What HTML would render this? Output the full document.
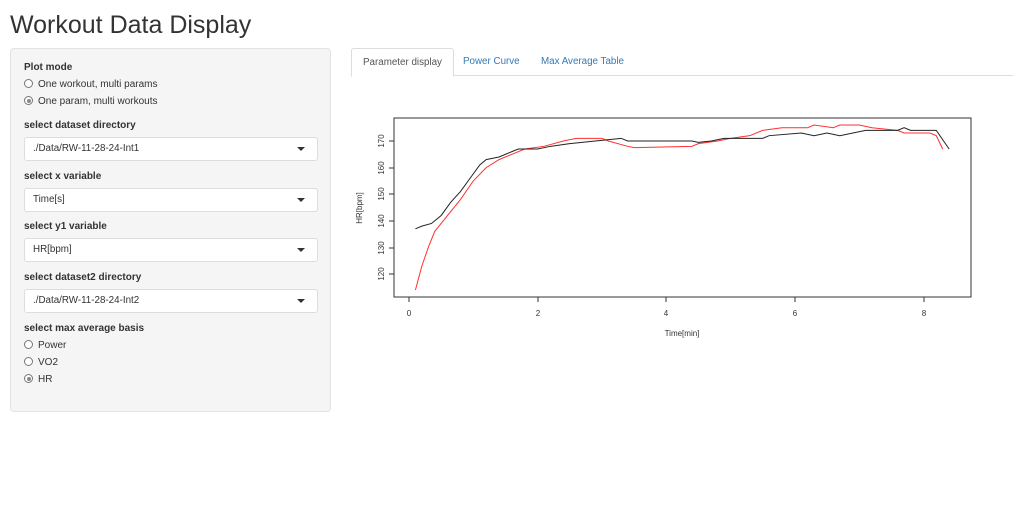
<!DOCTYPE html>
<html><head><style>
body{margin:0;width:1024px;height:508px;background:#fff;font-family:"Liberation Sans",Arial,sans-serif;color:#333;position:relative;overflow:hidden}
.a{position:absolute}
h1{position:absolute;left:10px;top:11px;margin:0;font-size:25px;font-weight:400;color:#333}
.side{left:10px;top:48px;width:319px;height:362px;background:#f5f5f5;border:1px solid #e3e3e3;border-radius:4px}
.lb{position:absolute;left:24px;font-size:10px;font-weight:bold;color:#333}
.rd{position:absolute;left:24px;font-size:10px;color:#333}
.rd i{display:inline-block;width:7px;height:7px;border:1px solid #777;border-radius:50%;vertical-align:-1px;margin-right:5px;background:#fff;position:relative}
.rd i.on::after{content:"";position:absolute;left:1.5px;top:1.5px;width:4px;height:4px;border-radius:50%;background:#888}
.sel{position:absolute;left:24px;width:292px;height:22px;background:#fff;border:1px solid #ddd;border-radius:3px;font-size:9.8px;line-height:22px;text-indent:8px;color:#333}
.sel::after{content:"";position:absolute;right:12px;top:9px;border-left:4px solid transparent;border-right:4px solid transparent;border-top:4px solid #333}
.tabs{left:351px;top:48px;width:662px;height:27px;border-bottom:1px solid #ddd}
.tab{position:absolute;top:0;height:27px;line-height:27px;font-size:9.8px;color:#337ab7}
.tab.act{background:#fff;border:1px solid #ddd;border-bottom-color:#fff;border-radius:3px 3px 0 0;color:#555;padding:0 11px;height:27px}
</style></head><body>
<h1>Workout Data Display</h1>
<div class="a side"></div>
<div class="lb" style="top:62px">Plot mode</div>
<div class="rd" style="top:79px"><i></i>One workout, multi params</div>
<div class="rd" style="top:96px"><i class="on"></i>One param, multi workouts</div>
<div class="lb" style="top:120px">select dataset directory</div>
<div class="sel" style="top:137px">./Data/RW-11-28-24-Int1</div>
<div class="lb" style="top:171px">select x variable</div>
<div class="sel" style="top:188px">Time[s]</div>
<div class="lb" style="top:221px">select y1 variable</div>
<div class="sel" style="top:238px">HR[bpm]</div>
<div class="lb" style="top:272px">select dataset2 directory</div>
<div class="sel" style="top:289px">./Data/RW-11-28-24-Int2</div>
<div class="lb" style="top:323px">select max average basis</div>
<div class="rd" style="top:340px"><i></i>Power</div>
<div class="rd" style="top:357px"><i></i>VO2</div>
<div class="rd" style="top:374px"><i class="on"></i>HR</div>
<div class="a tabs">
<div class="tab act" style="left:0">Parameter display</div>
<div class="tab" style="left:112px">Power Curve</div>
<div class="tab" style="left:190px">Max Average Table</div>
</div>
<svg class="a" style="left:0;top:0" width="1024" height="508">
<rect x="394" y="118" width="577" height="179" fill="none" stroke="#333" stroke-width="1"/>
<g stroke="#333" stroke-width="1">
<line x1="409" y1="297" x2="924" y2="297"/>
<line x1="409" y1="297" x2="409" y2="302"/><line x1="538" y1="297" x2="538" y2="302"/><line x1="666" y1="297" x2="666" y2="302"/><line x1="795" y1="297" x2="795" y2="302"/><line x1="924" y1="297" x2="924" y2="302"/>
<line x1="394" y1="274" x2="389" y2="274"/><line x1="394" y1="248" x2="389" y2="248"/><line x1="394" y1="221" x2="389" y2="221"/><line x1="394" y1="194" x2="389" y2="194"/><line x1="394" y1="168" x2="389" y2="168"/><line x1="394" y1="141" x2="389" y2="141"/>
</g>
<g font-size="8" fill="#333" text-anchor="middle" font-family="Liberation Sans,sans-serif">
<text x="409" y="316">0</text><text x="538" y="316">2</text><text x="666" y="316">4</text><text x="795" y="316">6</text><text x="924" y="316">8</text>
<text x="682" y="336">Time[min]</text>
<text transform="translate(384,274) rotate(-90)">120</text>
<text transform="translate(384,248) rotate(-90)">130</text>
<text transform="translate(384,221) rotate(-90)">140</text>
<text transform="translate(384,194) rotate(-90)">150</text>
<text transform="translate(384,168) rotate(-90)">160</text>
<text transform="translate(384,141) rotate(-90)">170</text>
<text transform="translate(362,208) rotate(-90)">HR[bpm]</text>
</g>
<g transform="translate(409,593.2) scale(64.3,-2.66)" fill="none">
<polyline vector-effect="non-scaling-stroke" stroke="#ff3030" stroke-width="1" points="0.1,114 0.2,123 0.3,130 0.4,136 0.6,142 0.8,148 1.0,155 1.2,160 1.4,163 1.6,165 1.8,167 2.1,168 2.4,170 2.6,171 3.0,171 3.1,170 3.4,168 3.5,167.5 4.4,168 4.5,169 4.8,170 5.0,171 5.3,172 5.5,174 5.8,175 6.2,175 6.3,176 6.6,175 6.7,176 7.0,176 7.2,175 7.6,174 7.7,173 8.1,173 8.2,172 8.3,167"/>
<polyline vector-effect="non-scaling-stroke" stroke="#222" stroke-width="1" points="0.1,137 0.2,138 0.35,139 0.5,142 0.65,147 0.8,151 0.95,156 1.1,161 1.2,163 1.4,164 1.6,166 1.7,167 2.0,167 2.2,168 2.5,169 2.9,170 3.3,171 3.4,170 4.4,170 4.5,169.5 4.7,170 4.9,171 5.5,171 5.6,172 6.1,173 6.3,172 6.5,173 6.7,172 7.1,174 7.6,174 7.7,175 7.8,174 8.0,174 8.2,174 8.4,167"/>
</g>
</svg>
</body></html>
